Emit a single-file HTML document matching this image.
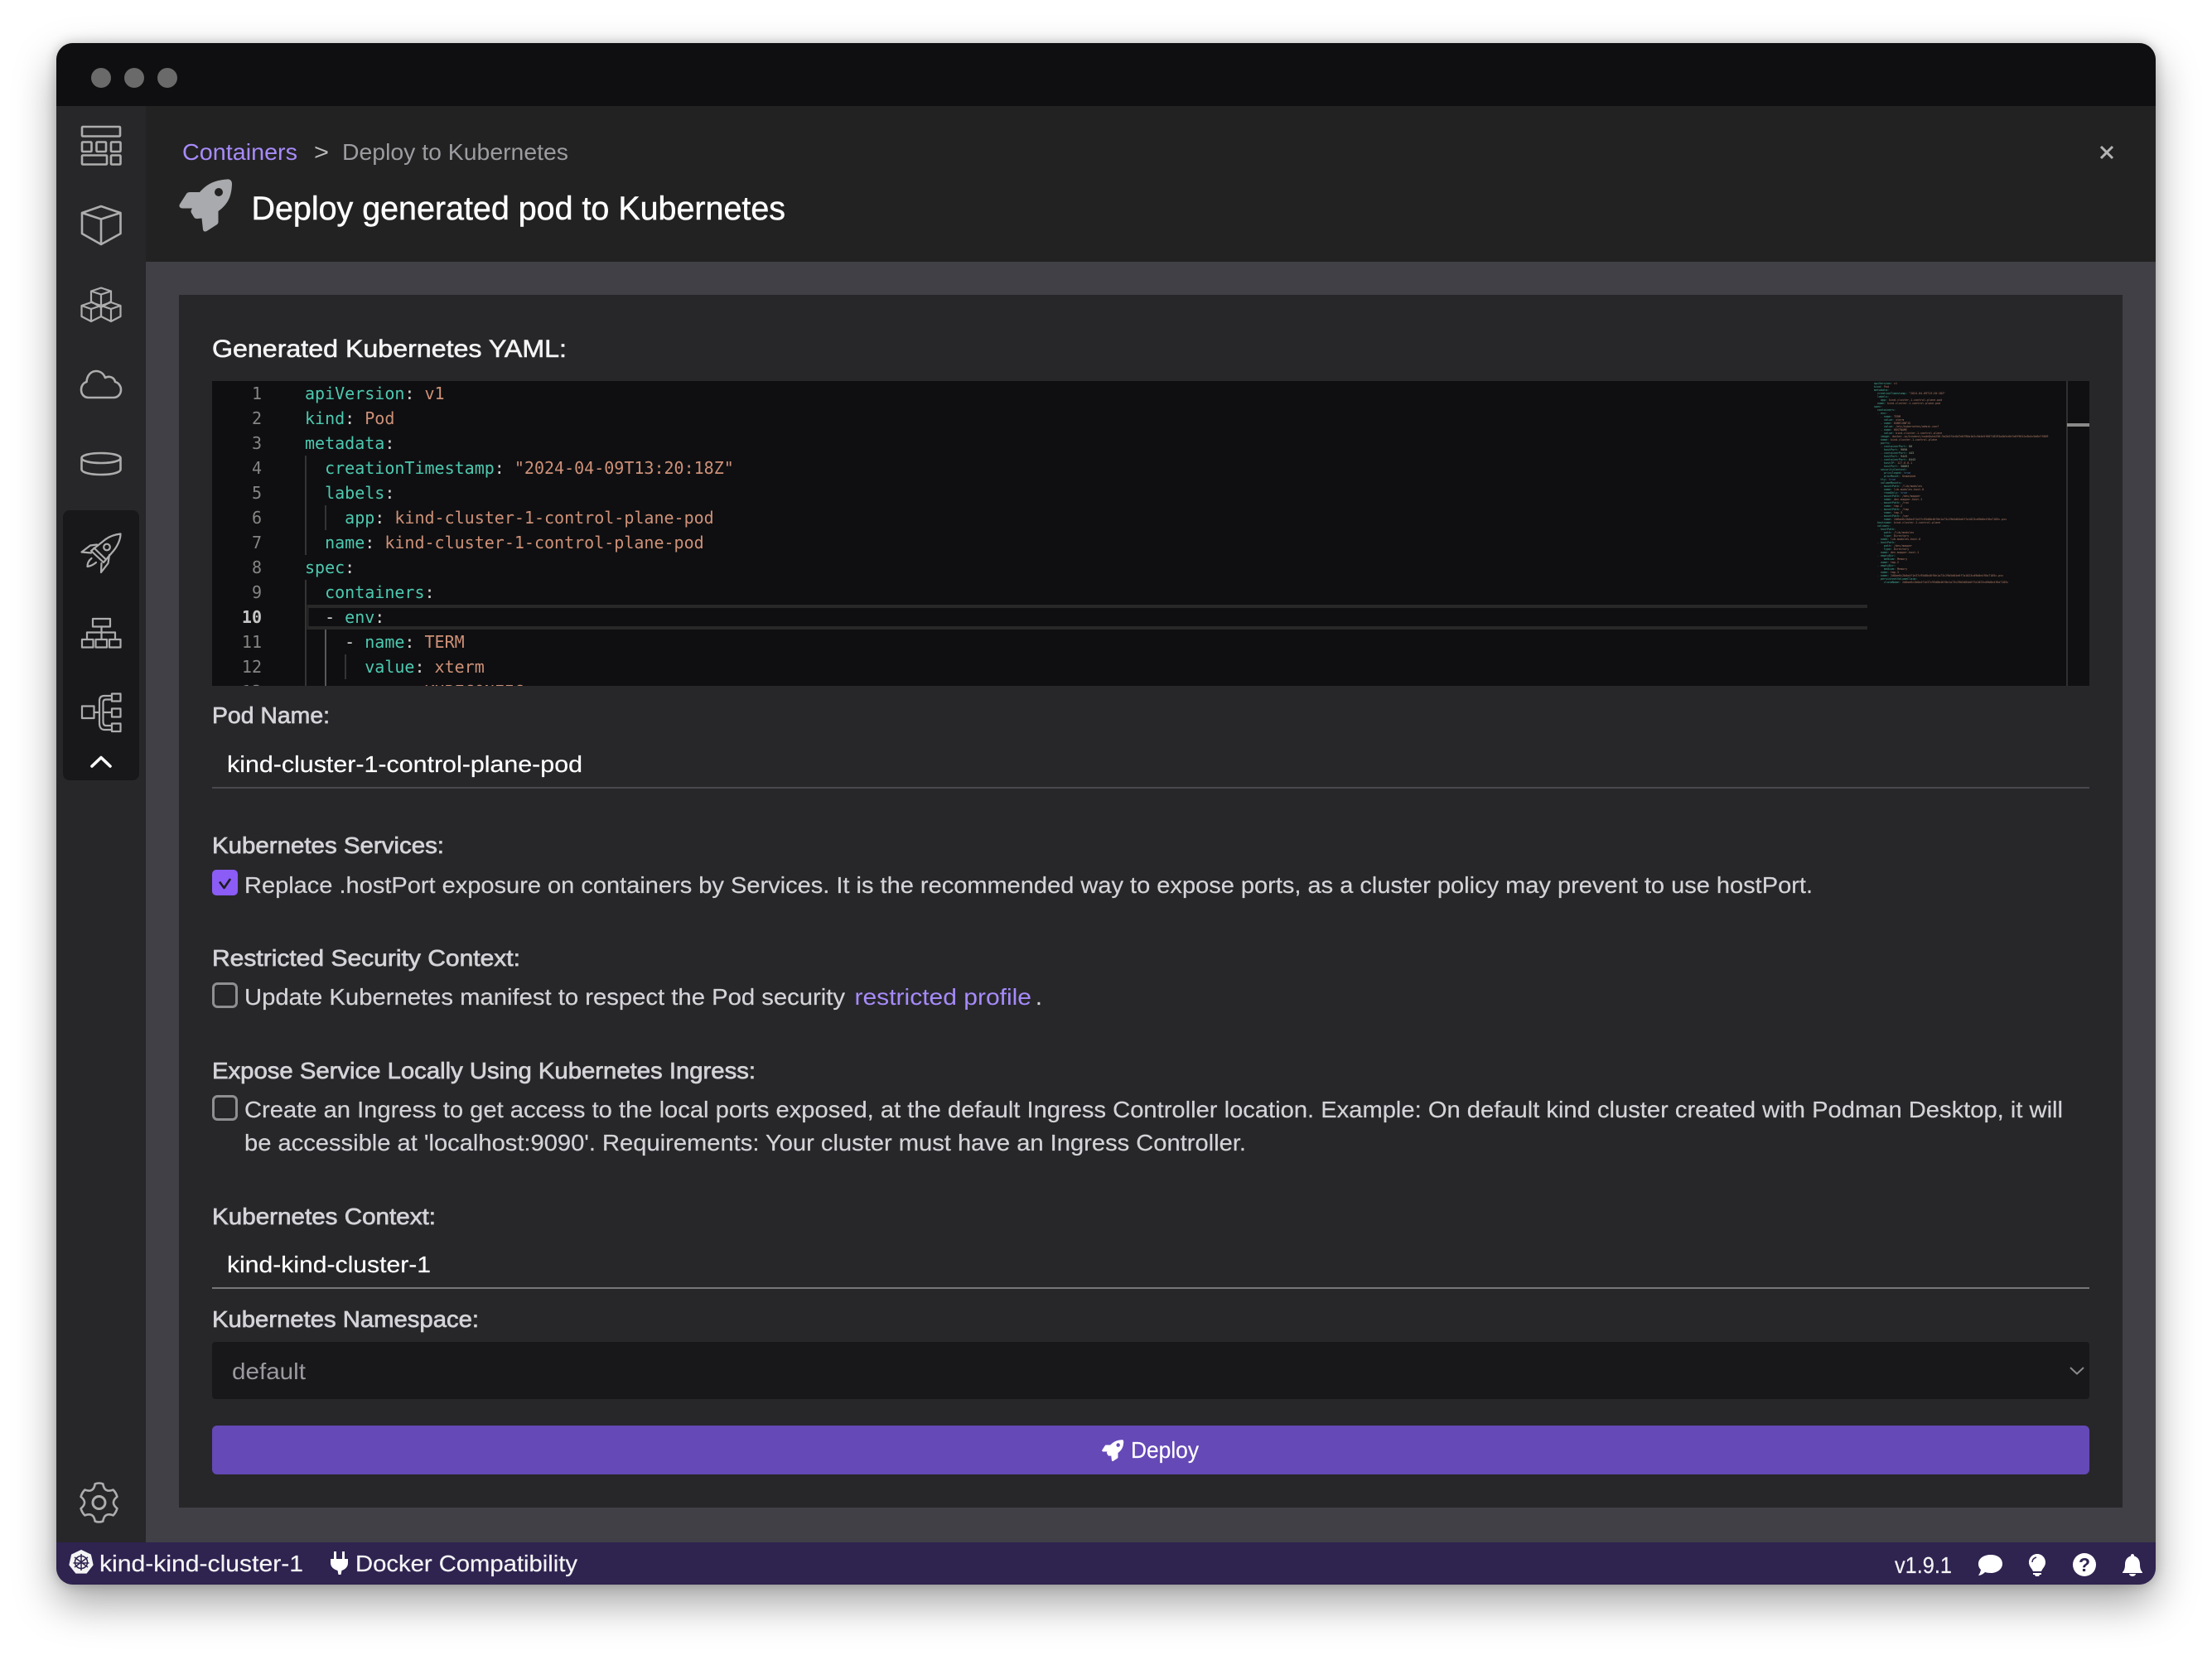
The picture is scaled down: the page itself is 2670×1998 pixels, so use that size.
<!DOCTYPE html>
<html lang="en"><head><meta charset="utf-8"><title>Deploy generated pod to Kubernetes</title>
<style>
html,body{margin:0;padding:0;background:#fff;width:2670px;height:1998px;overflow:hidden}
.shadow{position:absolute;left:68px;top:52px;width:2534px;height:1861px;border-radius:20px;box-shadow:0 22px 50px rgba(0,0,0,.36),0 0 14px rgba(0,0,0,.22)}
svg{position:absolute;left:0;top:0}
text{font-family:"Liberation Sans",sans-serif;font-size:28px;white-space:pre}
.l{fill:#d4d4d8;stroke:#d4d4d8;stroke-width:.7}
.t{fill:#d4d4d8;stroke:#d4d4d8;stroke-width:.2}
.c text{font-family:"DejaVu Sans Mono","Liberation Mono",monospace;font-size:20px;fill:#4ec9b0}
.c tspan.v{fill:#ce9178}.c tspan.w{fill:#d4d4d4}
.n text{font-family:"DejaVu Sans Mono","Liberation Mono",monospace;font-size:20px;fill:#858585;text-anchor:end}
.m text{font-family:"DejaVu Sans Mono","Liberation Mono",monospace;font-size:3.33px;fill:#4ec9b0;fill-opacity:.85}
.m tspan.v{fill:#ce9178}.m tspan.g{fill:#b5cea8}.m tspan.b{fill:#569cd6}
.i{fill:none;stroke:#adadad;stroke-width:2.6;stroke-linejoin:round;stroke-linecap:round}
</style></head><body>
<div class="shadow"></div>
<svg width="2670" height="1998" viewBox="0 0 2670 1998" xmlns="http://www.w3.org/2000/svg">
<defs>
<clipPath id="win"><rect x="68" y="52" width="2534" height="1861" rx="20"/></clipPath>
<clipPath id="ed"><rect x="256" y="460" width="2266" height="368"/></clipPath>
</defs>
<g clip-path="url(#win)">
<rect x="68" y="52" width="2534" height="1861" fill="#404046"/>
<rect x="68" y="52" width="2534" height="76" fill="#0f0f11"/>
<rect x="68" y="128" width="108" height="1734" fill="#27272a"/>
<rect x="176" y="128" width="2426" height="188" fill="#222222"/>
<rect x="216" y="356" width="2346" height="1464" fill="#27272a"/>
<rect x="68" y="1862" width="2534" height="51" fill="#2f2350"/>
<circle cx="122" cy="94" r="12" fill="#6a6a6a"/><circle cx="162" cy="94" r="12" fill="#6a6a6a"/><circle cx="202" cy="94" r="12" fill="#6a6a6a"/>
</g>

<!-- sidebar -->
<g class="i">
<rect x="99" y="153" width="46" height="11.5" rx="1"/>
<rect x="99" y="171.500" width="11.500" height="11.500" rx="1"/><rect x="116.500" y="171.500" width="11.500" height="11.500" rx="1"/><rect x="134" y="171.500" width="11.500" height="11.500" rx="1"/>
<rect x="99" y="187.500" width="30" height="11" rx="1"/><rect x="134" y="187.500" width="11.500" height="11" rx="1"/>
<path d="M122 249 L145.500 257 V282 L122 295 L99 282 V257 Z M99 257 L122 264.500 L145.500 257 M122 264.500 V295"/>
</g>
<g class="i" style="stroke-width:2.2">
<path d="M122 347.500 L134 351.500 V364 L122 371 L110 364 V351.500 Z M110 351.500 L122 355.500 L134 351.500 M122 355.500 V371"/>
<path d="M110 365 L122 369 V382 L110 388 L98.500 382 V369 Z M98.500 369 L110 373 L122 369 M110 373 V388"/>
<path d="M134 365 L145.500 369 V382 L134 388 L122 382 V369 Z M122 369 L134 373 L145.500 369 M134 373 V388"/>
</g>
<path class="i" d="M107 480 C101.500 480 98 476 98 470.500 C98 465.500 101 462 104.500 461 C105 453 110 448 116 448 C121 448 125 451 127 456 C129 455 131 454.500 133 455 C136 455.500 138.500 458 139 461 C143 462 146 466 146 470.500 C146 476 142 480 137 480 Z"/>
<path class="i" d="M98.500 553 C98.500 549.500 109 547 122 547 C135 547 145.500 549.500 145.500 553 C145.500 556.500 135 559 122 559 C109 559 98.500 556.500 98.500 553 Z M98.500 553 V566.500 C98.500 570.500 109 573 122 573 C135 573 145.500 570.500 145.500 566.500 V553"/>
<rect x="76" y="616" width="92" height="326" rx="8" fill="#18181b"/>
<g class="i" style="stroke-width:2.2">
<path d="M145.500 644.500 C137 645.500 130 648.500 125 653 L110 665 L125 679 L137 665 C142 659 145.500 651 145.500 644.500 Z"/>
<path d="M113.500 661.500 L128 675.500"/>
<circle cx="129" cy="660.500" r="3.800"/>
<path d="M117 657.500 L109 658.500 L98.500 666.500 L110 667.500"/>
<path d="M132 670 L130.500 680 L122 691 L122.500 680"/>
<path d="M110.500 674 C106.500 677 105.500 681 105.500 684 C109 683.500 113 681.500 116 679"/>
</g>
<g class="i" style="stroke-width:2.2">
<rect x="112" y="747" width="21" height="9.500" />
<path d="M122.500 756.500 V772 M105 772 V763.500 H139 V772"/>
<rect x="99" y="772" width="13.500" height="9.500"/><rect x="115.500" y="772" width="13.500" height="9.500"/><rect x="132" y="772" width="13.500" height="9.500"/>
<rect x="99" y="852.500" width="14.500" height="14.500"/>
<rect x="135" y="837.500" width="10.500" height="9"/><rect x="135" y="855.500" width="10.500" height="10"/><rect x="135" y="873.500" width="10.500" height="9.500"/>
<path d="M113.500 860 H120 M124.500 860 H135"/>
<path d="M135 840 H126 C122 840 120 842 120 846 V873 C120 878 122 881 126 881 H135"/>
<path d="M135 844.500 H128 C125.500 844.500 124.500 846 124.500 848 V871 C124.500 874 125.500 876 128 876 H135"/>
</g>
<path d="M111 925 L122 914.500 L133 925" fill="none" stroke="#fff" stroke-width="3.600" stroke-linecap="round" stroke-linejoin="round"/>
<g transform="translate(119.500,1814)" class="i">
<path d="M-4.800 -22.500 Q0 -24.500 4.800 -22.500 Q6.500 -11.300 17.100 -15.400 Q20.500 -12 21.900 -7.100 Q13 0 21.900 7.100 Q20.500 12 17.100 15.400 Q6.500 11.300 4.800 22.500 Q0 24.500 -4.800 22.500 Q-6.500 11.300 -17.100 15.400 Q-20.500 12 -21.900 7.100 Q-13 0 -21.900 -7.100 Q-20.500 -12 -17.100 -15.400 Q-6.500 -11.300 -4.800 -22.500 Z"/>
<circle r="7.500" style="stroke-width:3"/>
</g>

<!-- header -->
<text x="220" y="193" textLength="139" lengthAdjust="spacingAndGlyphs" fill="#a78bfa">Containers</text>
<text x="379" y="193" textLength="18" lengthAdjust="spacingAndGlyphs" fill="#bdbdbd">&gt;</text>
<text x="413" y="193" textLength="273" lengthAdjust="spacingAndGlyphs" fill="#9c9ca1">Deploy to Kubernetes</text>
<g transform="translate(216,216)"><path fill="#a9aaad" d="M58 .5 C61.500 0 64 2 64 6 C63.500 20 60 30 47.500 39 L47.500 52 C47.500 53 47 54 46 55 L33.500 63 C31 64 29.500 63.500 29 61 L27.500 47.500 L22 48 C20 48 19 47.500 18 46 L15 41 C14 39 14.500 38 16 35.500 L5 35.500 C1 35.500 -.5 33 1 30.500 L9 18 C10 16.500 11.500 16 13 16 L25 16 C33 7 42 1.500 58 .5 Z"/><circle cx="48" cy="16" r="5" fill="#222"/></g>
<text x="303.500" y="265" textLength="644.500" lengthAdjust="spacingAndGlyphs" style="font-size:40px;stroke:#fff;stroke-width:.5" fill="#fff">Deploy generated pod to Kubernetes</text>
<path d="M2536 177 L2550 191 M2550 177 L2536 191" stroke="#b4b4b4" stroke-width="3" fill="none"/>

<text x="256" y="431" textLength="428" lengthAdjust="spacingAndGlyphs" style="font-size:30px;stroke:#f4f4f5;stroke-width:.6" fill="#f4f4f5">Generated Kubernetes YAML:</text>

<!-- editor -->
<rect x="256" y="460" width="2266" height="368" fill="#0f0f11"/>
<g clip-path="url(#ed)">
<path d="M371.500 732 H2254 M371.500 758 H2254" stroke="#282828" stroke-width="4"/>
<path d="M371.500 730 V760" stroke="#282828" stroke-width="2"/>
<path d="M369 550 V670 M369 700 V828 M393 610 V640 M417 790 V820" stroke="#404040" stroke-width="1.500"/>
<path d="M393 760 V828" stroke="#707070" stroke-width="1.500"/>
<g class="n">
<text x="316" y="482">1</text><text x="316" y="512">2</text><text x="316" y="542">3</text><text x="316" y="572">4</text><text x="316" y="602">5</text><text x="316" y="632">6</text><text x="316" y="662">7</text><text x="316" y="692">8</text><text x="316" y="722">9</text><text x="316" y="752" style="fill:#c6c6c6;font-weight:700">10</text><text x="316" y="782">11</text><text x="316" y="812">12</text><text x="316" y="842">13</text>
</g>
<g class="c">
<text x="368" y="482">apiVersion<tspan class="w">: </tspan><tspan class="v">v1</tspan></text>
<text x="368" y="512">kind<tspan class="w">: </tspan><tspan class="v">Pod</tspan></text>
<text x="368" y="542">metadata<tspan class="w">:</tspan></text>
<text x="368" y="572">  creationTimestamp<tspan class="w">: </tspan><tspan class="v">"2024-04-09T13:20:18Z"</tspan></text>
<text x="368" y="602">  labels<tspan class="w">:</tspan></text>
<text x="368" y="632">    app<tspan class="w">: </tspan><tspan class="v">kind-cluster-1-control-plane-pod</tspan></text>
<text x="368" y="662">  name<tspan class="w">: </tspan><tspan class="v">kind-cluster-1-control-plane-pod</tspan></text>
<text x="368" y="692">spec<tspan class="w">:</tspan></text>
<text x="368" y="722">  containers<tspan class="w">:</tspan></text>
<text x="368" y="752"><tspan class="w">  - </tspan>env<tspan class="w">:</tspan></text>
<text x="368" y="782"><tspan class="w">    - </tspan>name<tspan class="w">: </tspan><tspan class="v">TERM</tspan></text>
<text x="368" y="812">      value<tspan class="w">: </tspan><tspan class="v">xterm</tspan></text>
<text x="368" y="842"><tspan class="w">    - </tspan>name<tspan class="w">: </tspan><tspan class="v">KUBECONFIG</tspan></text>
</g>
<g class="m">
<text x="2262" y="464">apiVersion: <tspan class="v">v1</tspan></text>
<text x="2262" y="468">kind: <tspan class="v">Pod</tspan></text>
<text x="2262" y="472">metadata:</text>
<text x="2262" y="476">  creationTimestamp: <tspan class="v">"2024-04-09T13:20:18Z"</tspan></text>
<text x="2262" y="480">  labels:</text>
<text x="2262" y="484">    app: <tspan class="v">kind-cluster-1-control-plane-pod</tspan></text>
<text x="2262" y="488">  name: <tspan class="v">kind-cluster-1-control-plane-pod</tspan></text>
<text x="2262" y="492">spec:</text>
<text x="2262" y="496">  containers:</text>
<text x="2262" y="500">  - env:</text>
<text x="2262" y="504">    - name: <tspan class="v">TERM</tspan></text>
<text x="2262" y="508">      value: <tspan class="v">xterm</tspan></text>
<text x="2262" y="512">    - name: <tspan class="v">KUBECONFIG</tspan></text>
<text x="2262" y="516">      value: <tspan class="v">/etc/kubernetes/admin.conf</tspan></text>
<text x="2262" y="520">    - name: <tspan class="v">HOSTNAME</tspan></text>
<text x="2262" y="524">      value: <tspan class="v">kind-cluster-1-control-plane</tspan></text>
<text x="2262" y="528">    image: <tspan class="v">docker.io/kindest/node@sha256:5a2b3f4c6d7e8f90a1b2c3d4e5f60718293a4b5c6d7e8f9012a3b4c5d6e7f809</tspan></text>
<text x="2262" y="532">    name: <tspan class="v">kind-cluster-1-control-plane</tspan></text>
<text x="2262" y="536">    ports:</text>
<text x="2262" y="540">    - containerPort: <tspan class="g">80</tspan></text>
<text x="2262" y="544">      hostPort: <tspan class="g">9090</tspan></text>
<text x="2262" y="548">    - containerPort: <tspan class="g">443</tspan></text>
<text x="2262" y="552">      hostPort: <tspan class="g">9443</tspan></text>
<text x="2262" y="556">    - containerPort: <tspan class="g">6443</tspan></text>
<text x="2262" y="560">      hostIP: <tspan class="v">127.0.0.1</tspan></text>
<text x="2262" y="564">      hostPort: <tspan class="g">50863</tspan></text>
<text x="2262" y="568">    securityContext:</text>
<text x="2262" y="572">      privileged: <tspan class="b">true</tspan></text>
<text x="2262" y="576">      procMount: <tspan class="v">Unmasked</tspan></text>
<text x="2262" y="580">    tty: <tspan class="b">true</tspan></text>
<text x="2262" y="584">    volumeMounts:</text>
<text x="2262" y="588">    - mountPath: <tspan class="v">/lib/modules</tspan></text>
<text x="2262" y="592">      name: <tspan class="v">lib-modules-host-0</tspan></text>
<text x="2262" y="596">      readOnly: <tspan class="b">true</tspan></text>
<text x="2262" y="600">    - mountPath: <tspan class="v">/dev/mapper</tspan></text>
<text x="2262" y="604">      name: <tspan class="v">dev-mapper-host-1</tspan></text>
<text x="2262" y="608">    - mountPath: <tspan class="v">/run</tspan></text>
<text x="2262" y="612">      name: <tspan class="v">tmp-2</tspan></text>
<text x="2262" y="616">    - mountPath: <tspan class="v">/tmp</tspan></text>
<text x="2262" y="620">      name: <tspan class="v">tmp-3</tspan></text>
<text x="2262" y="624">    - mountPath: <tspan class="v">/var</tspan></text>
<text x="2262" y="628">      name: <tspan class="v">2d8ae6c2b0a4f1e37c95d8b46f0e1a73c29b5d84e6f7a1023cd9b8e4f6a7105c-pvc</tspan></text>
<text x="2262" y="632">  hostname: <tspan class="v">kind-cluster-1-control-plane</tspan></text>
<text x="2262" y="636">  volumes:</text>
<text x="2262" y="640">  - hostPath:</text>
<text x="2262" y="644">      path: <tspan class="v">/lib/modules</tspan></text>
<text x="2262" y="648">      type: <tspan class="v">Directory</tspan></text>
<text x="2262" y="652">    name: <tspan class="v">lib-modules-host-0</tspan></text>
<text x="2262" y="656">  - hostPath:</text>
<text x="2262" y="660">      path: <tspan class="v">/dev/mapper</tspan></text>
<text x="2262" y="664">      type: <tspan class="v">Directory</tspan></text>
<text x="2262" y="668">    name: <tspan class="v">dev-mapper-host-1</tspan></text>
<text x="2262" y="672">  - emptyDir:</text>
<text x="2262" y="676">      medium: <tspan class="v">Memory</tspan></text>
<text x="2262" y="680">    name: <tspan class="v">tmp-2</tspan></text>
<text x="2262" y="684">  - emptyDir:</text>
<text x="2262" y="688">      medium: <tspan class="v">Memory</tspan></text>
<text x="2262" y="692">    name: <tspan class="v">tmp-3</tspan></text>
<text x="2262" y="696">  - name: <tspan class="v">2d8ae6c2b0a4f1e37c95d8b46f0e1a73c29b5d84e6f7a1023cd9b8e4f6a7105c-pvc</tspan></text>
<text x="2262" y="700">    persistentVolumeClaim:</text>
<text x="2262" y="704">      claimName: <tspan class="v">2d8ae6c2b0a4f1e37c95d8b46f0e1a73c29b5d84e6f7a1023cd9b8e4f6a7105c</tspan></text>
</g>
<rect x="2495" y="461" width="27" height="367" fill="#101012"/>
<path d="M2495 460 V828" stroke="#3a3a3a" stroke-width="1.500"/>
<rect x="2495" y="511" width="27" height="4" fill="#8a8a8a"/>
</g>

<!-- form -->
<text class="l" x="256" y="873" textLength="142" lengthAdjust="spacingAndGlyphs">Pod Name:</text>
<text x="274" y="932" textLength="429" lengthAdjust="spacingAndGlyphs" fill="#fff" stroke="#fff" stroke-width=".2">kind-cluster-1-control-plane-pod</text>
<rect x="256" y="950" width="2266" height="2" fill="#4a4a4e"/>

<text class="l" x="256" y="1030" textLength="280" lengthAdjust="spacingAndGlyphs">Kubernetes Services:</text>
<rect x="256" y="1050" width="31" height="31" rx="5" fill="#8b5cf6"/>
<path d="M265 1064.500 L270.500 1072 L278 1061" fill="none" stroke="#1d1d20" stroke-width="2.600" stroke-linejoin="round"/>
<text class="t" x="295" y="1078" textLength="1893" lengthAdjust="spacingAndGlyphs">Replace .hostPort exposure on containers by Services. It is the recommended way to expose ports, as a cluster policy may prevent to use hostPort.</text>

<text class="l" x="256" y="1166" textLength="372" lengthAdjust="spacingAndGlyphs">Restricted Security Context:</text>
<rect x="257.500" y="1187.500" width="28" height="28" rx="5" fill="none" stroke="#8f8f92" stroke-width="3"/>
<text class="t" x="295" y="1213" textLength="725" lengthAdjust="spacingAndGlyphs">Update Kubernetes manifest to respect the Pod security</text>
<text x="1031.500" y="1213" textLength="213.500" lengthAdjust="spacingAndGlyphs" fill="#a78bfa">restricted profile</text>
<text class="t" x="1250" y="1213">.</text>

<text class="l" x="256" y="1302" textLength="656" lengthAdjust="spacingAndGlyphs">Expose Service Locally Using Kubernetes Ingress:</text>
<rect x="257.500" y="1323.500" width="28" height="28" rx="5" fill="none" stroke="#8f8f92" stroke-width="3"/>
<text class="t" x="295" y="1349" textLength="2195" lengthAdjust="spacingAndGlyphs">Create an Ingress to get access to the local ports exposed, at the default Ingress Controller location. Example: On default kind cluster created with Podman Desktop, it will</text>
<text class="t" x="295" y="1389" textLength="1209" lengthAdjust="spacingAndGlyphs">be accessible at 'localhost:9090'. Requirements: Your cluster must have an Ingress Controller.</text>

<text class="l" x="256" y="1478" textLength="270" lengthAdjust="spacingAndGlyphs">Kubernetes Context:</text>
<text x="274" y="1536" textLength="246" lengthAdjust="spacingAndGlyphs" fill="#fff" stroke="#fff" stroke-width=".2">kind-kind-cluster-1</text>
<rect x="256" y="1554" width="2266" height="2" fill="#77777a"/>

<text class="l" x="256" y="1602" textLength="322" lengthAdjust="spacingAndGlyphs">Kubernetes Namespace:</text>
<rect x="256" y="1620" width="2266" height="69" rx="4" fill="#18181b"/>
<text x="280" y="1665" textLength="89" lengthAdjust="spacingAndGlyphs" fill="#9a9a9f">default</text>
<path d="M2499 1651 L2507 1658.500 L2515 1651" fill="none" stroke="#8a8a8a" stroke-width="2"/>

<rect x="256" y="1721" width="2266" height="59" rx="6" fill="#6549b7"/>
<g transform="translate(1330,1738) scale(.41)"><path fill="#fff" d="M58 .5 C61.500 0 64 2 64 6 C63.500 20 60 30 47.500 39 L47.500 52 C47.500 53 47 54 46 55 L33.500 63 C31 64 29.500 63.500 29 61 L27.500 47.500 L22 48 C20 48 19 47.500 18 46 L15 41 C14 39 14.500 38 16 35.500 L5 35.500 C1 35.500 -.5 33 1 30.500 L9 18 C10 16.500 11.500 16 13 16 L25 16 C33 7 42 1.500 58 .5 Z"/><circle cx="48" cy="16" r="5.500" fill="#6549b7"/></g>
<text x="1365" y="1760" textLength="82" lengthAdjust="spacingAndGlyphs" fill="#fff" stroke="#fff" stroke-width=".2">Deploy</text>

<!-- status bar -->
<polygon points="98,1872 109,1877.300 111.600,1889.100 104.100,1898.600 91.900,1898.600 84.400,1889.100 87,1877.300" fill="#f4f4f5" stroke="#f4f4f5" stroke-width="2" stroke-linejoin="round"/>
<g fill="none" stroke="#2f2350" stroke-width="1.500"><circle cx="98" cy="1886" r="7.500"/><path d="M98 1876 V1896 M90 1880 L106 1892 M106 1880 L90 1892 M88.500 1887 H107.500"/></g>
<text x="120" y="1897" textLength="246" lengthAdjust="spacingAndGlyphs" fill="#f4f4f5" stroke="#f4f4f5" stroke-width=".2">kind-kind-cluster-1</text>
<path fill="#fff" d="M403 1873 h3 v9 h-3 Z M413 1873 h3 v9 h-3 Z M399 1882 H420 V1887 C420 1892 416 1895 412.500 1896 L411.500 1901 H408.500 L407.500 1896 C403.500 1895 399 1892 399 1887 Z"/>
<text x="429" y="1897" textLength="268" lengthAdjust="spacingAndGlyphs" fill="#f4f4f5" stroke="#f4f4f5" stroke-width=".2">Docker Compatibility</text>
<text x="2287" y="1899" textLength="69" lengthAdjust="spacingAndGlyphs" fill="#f4f4f5" stroke="#f4f4f5" stroke-width=".2">v1.9.1</text>
<path fill="#fff" d="M2403 1877 C2411 1877 2417 1881 2417 1888 C2417 1894 2411 1899 2403 1899 C2400 1899 2398 1898.500 2396 1898 C2394 1900 2391 1902 2388 1902 C2389.500 1900 2390.500 1897.500 2391 1895 C2389 1893 2388 1891 2388 1888 C2388 1881 2395 1877 2403 1877 Z"/>
<path fill="#fff" d="M2459 1876 C2453 1876 2449 1881 2449 1886 C2449 1890 2451 1892 2453 1895 L2454 1897 H2464 L2465 1895 C2467 1892 2469 1890 2469 1886 C2469 1881 2465 1876 2459 1876 Z M2454 1899 H2464 V1901 H2462 L2461 1903 H2457 L2456 1901 H2454 Z"/>
<path d="M2453 1886 C2453 1883 2455 1881 2458 1880" fill="none" stroke="#2f2350" stroke-width="1.500"/>
<circle cx="2516" cy="1889" r="14" fill="#fff"/>
<text x="2516" y="1897" text-anchor="middle" style="font-size:23px;font-weight:700" fill="#2f2350">?</text>
<path fill="#fff" d="M2574 1876 a2 2 0 0 1 2 2.500 C2581 1880 2583 1884 2583 1889 C2583 1893 2584 1896 2586 1898 V1899 H2562 V1898 C2564 1896 2565 1893 2565 1889 C2565 1884 2567 1880 2572 1878.500 A2 2 0 0 1 2574 1876 Z M2570 1900 H2578 A4 3 0 0 1 2570 1900 Z"/>
</svg>
</body></html>
